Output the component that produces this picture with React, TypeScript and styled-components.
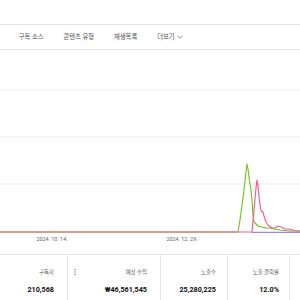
import React from 'react';
import styled, { createGlobalStyle } from 'styled-components';

const GlobalStyle = createGlobalStyle`
  html, body {
    margin: 0;
    padding: 0;
    background: #fff;
  }
  body {
    font-family: Roboto, "Noto Sans CJK KR", "Noto Sans", sans-serif;
    color: #0d0d0d;
    overflow: hidden;
  }
`;

const Page = styled.div`
  width: 300px;
  height: 300px;
  overflow: hidden;
  padding-top: 24px;
  box-sizing: border-box;
`;

const TabBar = styled.nav`
  height: 24px;
  display: flex;
  align-items: center;
  border-top: 1px solid #e6e6e6;
  border-bottom: 1px solid #e6e6e6;
  overflow: hidden;
  white-space: nowrap;
`;

const TabTrack = styled.div`
  display: flex;
  align-items: center;
  gap: 20px;
  margin-left: -26px;
`;

const Tab = styled.span`
  display: inline-flex;
  align-items: center;
  gap: 2px;
  font-size: 6.3px;
  line-height: 8px;
  color: #505050;
`;

const ChartArea = styled.div`
  height: 184px;
  svg {
    display: block;
  }
`;

const AxisRow = styled.div`
  display: flex;
  gap: 70px;
  padding-left: 22px;
  height: 10px;
  align-items: center;
`;

const AxisLabel = styled.span`
  width: 60px;
  text-align: center;
  font-size: 5.4px;
  line-height: 8px;
  color: #606060;
`;

const Table = styled.div`
  margin-top: 10px;
  display: grid;
  grid-template-columns: 68px 93px 67px 62px 1fr;
  border-top: 1px solid #e6e6e6;
  height: 60px;
`;

const Column = styled.div<{ $pad: number }>`
  display: flex;
  flex-direction: column;
  align-items: stretch;
  padding: 13px ${(p) => p.$pad}px 0 6px;
  border-right: 1px solid #e6e6e6;
`;

const HeaderLine = styled.div`
  display: flex;
  align-items: center;
  justify-content: space-between;
  height: 8px;
`;

const Label = styled.span`
  margin-left: auto;
  font-size: 5.4px;
  line-height: 8px;
  color: #606060;
`;

const Value = styled.span`
  margin-top: 9px;
  text-align: right;
  font-size: 7.2px;
  line-height: 10px;
  font-weight: 700;
  color: #0d0d0d;
`;

const Chevron = () => (
  <svg width="6" height="4" viewBox="0 0 6 4">
    <path d="M0.5 0.8 L3 3.2 L5.5 0.8" fill="none" stroke="#606060" strokeWidth="0.7" />
  </svg>
);

const DotsIcon = () => (
  <svg width="2" height="8" viewBox="0 0 2 8">
    <circle cx="1" cy="1.3" r="0.65" fill="#606060" />
    <circle cx="1" cy="4" r="0.65" fill="#606060" />
    <circle cx="1" cy="6.7" r="0.65" fill="#606060" />
  </svg>
);

// chart points in page coordinates; the svg starts 50px down
const toPath = (pts: [number, number][]) =>
  pts.map(([x, y], i) => `${i ? 'L' : 'M'}${x} ${y - 50}`).join(' ');

const green: [number, number][] = [
  [0, 232], [238, 232], [240, 220], [242, 205], [244, 190], [246, 172], [247, 164],
  [248, 169], [249, 177], [250, 184], [251, 190], [252, 200], [253, 215], [254, 222],
  [256, 224], [258, 226], [262, 227], [266, 228], [270, 228], [274, 229], [280, 230],
  [290, 231], [300, 231],
];

const red: [number, number][] = [
  [0, 232], [252, 232], [254, 210], [256, 188], [257, 180], [258, 186], [259, 196],
  [260, 205], [261, 211], [263, 212], [264, 216], [266, 222], [268, 225], [272, 228],
  [275, 228], [278, 226], [281, 227], [285, 229], [289, 229], [293, 230], [297, 231],
  [300, 231],
];

const tabs = ['구독 상태', '구독 소스', '콘텐츠 유형', '재생목록'];

const columns = [
  { label: '구독자', value: '210,568', pad: 13, dots: false },
  { label: '예상 수익', value: '₩46,561,545', pad: 13, dots: true },
  { label: '노출수', value: '25,280,225', pad: 11, dots: false },
  { label: '노출 클릭률', value: '12.0%', pad: 10, dots: false },
];

const App = () => (
  <Page>
    <GlobalStyle />
    <TabBar>
      <TabTrack>
        {tabs.map((t) => (
          <Tab key={t}>{t}</Tab>
        ))}
        <Tab>
          더보기
          <Chevron />
        </Tab>
      </TabTrack>
    </TabBar>
    <ChartArea>
      <svg width="300" height="184" viewBox="0 0 300 184">
        {[40, 87, 134].map((y) => (
          <line key={y} x1="0" x2="300" y1={y} y2={y} stroke="#ececec" strokeWidth="1" />
        ))}
        <path d={toPath(green)} fill="none" stroke="#6cc01f" strokeWidth="1.1" strokeLinejoin="round" />
        <path d={toPath(red)} fill="none" stroke="#f2608a" strokeWidth="1.2" strokeLinejoin="round" />
        <line x1="252" x2="300" y1="182.3" y2="182.3" stroke="#9b5fe0" strokeWidth="1" />
      </svg>
    </ChartArea>
    <AxisRow>
      <AxisLabel>2024. 10. 14.</AxisLabel>
      <AxisLabel>2024. 12. 29.</AxisLabel>
    </AxisRow>
    <Table>
      {columns.map((c) => (
        <Column key={c.label} $pad={c.pad}>
          <HeaderLine>
            {c.dots && <DotsIcon />}
            <Label>{c.label}</Label>
          </HeaderLine>
          <Value>{c.value}</Value>
        </Column>
      ))}
      <Column $pad={10} />
    </Table>
  </Page>
);

export default App;
